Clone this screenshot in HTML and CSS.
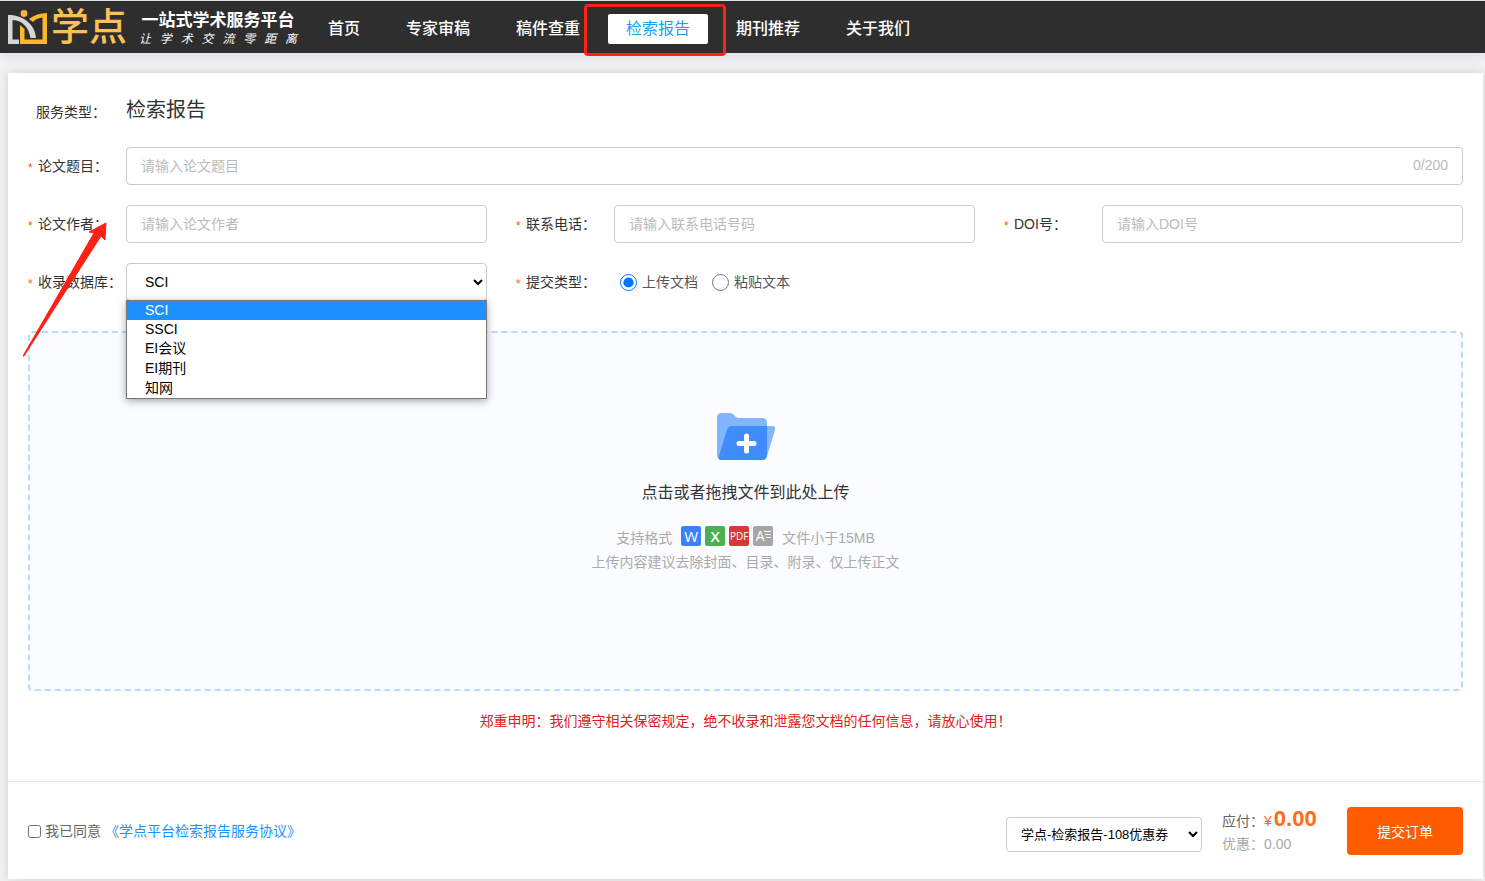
FILE: index.html
```html
<!DOCTYPE html>
<html lang="zh-CN">
<head>
  <meta charset="UTF-8">
  <title>学点 - 检索报告</title>
  <meta name="viewport" content="width=device-width, initial-scale=1.0">
  <link rel="stylesheet" href="styles.css">
</head>
<body>

<header class="header">
  <a class="logo" href="#">
    <svg class="logo-mark" viewBox="0 0 39 34" width="39" height="34" aria-hidden="true">
      <path d="M39 3 V34 H12 V15 L16.500 19 V29.500 H34.500 V7.500 C31 8 28 9 25 12 L21 9 C26 5 32 3 39 3 Z" fill="#fbb829"/>
      <path d="M0 5 C14 5 27 13 28 28 H22.500 C21 18 15 10.500 4.500 10 V29.500 H11 V34 H0 Z" fill="#d6d6d8"/>
      <circle cx="16" cy="3.5" r="3.4" fill="#fbb040"/>
    </svg>
    <span class="logo-name">学点</span>
    <span class="slogan">
      <span class="slogan-main">一站式学术服务平台</span>
      <span class="slogan-sub">让 学 术 交 流 零 距 离</span>
    </span>
  </a>
  <nav class="nav">
    <a href="#">首页</a>
    <a href="#">专家审稿</a>
    <a href="#">稿件查重</a>
    <a href="#" class="active">检索报告<span class="mark-box"></span></a>
    <a href="#">期刊推荐</a>
    <a href="#">关于我们</a>
  </nav>
</header>

<form class="card">
  <div class="card-body">
    <div class="field field-title">
      <span class="label">服务类型：</span>
      <h1>检索报告</h1>
    </div>

    <div class="field">
      <label class="label required" for="title">论文题目：</label>
      <div class="counted">
        <input type="text" id="title" maxlength="200" placeholder="请输入论文题目">
        <span class="counter">0/200</span>
      </div>
    </div>

    <div class="grid">
      <div class="field">
        <label class="label required" for="author">论文作者：</label>
        <input type="text" id="author" placeholder="请输入论文作者">
      </div>
      <div class="field">
        <label class="label required" for="phone">联系电话：</label>
        <input type="text" id="phone" placeholder="请输入联系电话号码">
      </div>
      <div class="field">
        <label class="label required" for="doi">DOI号：</label>
        <input type="text" id="doi" placeholder="请输入DOI号">
      </div>

      <div class="field">
        <label class="label required" for="database">收录数据库：</label>
        <div class="dropdown">
          <select id="database">
            <option selected>SCI</option>
            <option>SSCI</option>
            <option>EI会议</option>
            <option>EI期刊</option>
            <option>知网</option>
          </select>
          <ul class="options">
            <li class="selected">SCI</li>
            <li class="latin">SSCI</li>
            <li>EI会议</li>
            <li>EI期刊</li>
            <li>知网</li>
          </ul>
        </div>
      </div>
      <div class="field">
        <span class="label required">提交类型：</span>
        <div class="radios">
          <label><input type="radio" name="submitType" checked>上传文档</label>
          <label><input type="radio" name="submitType">粘贴文本</label>
        </div>
      </div>
    </div>

    <!-- upload area -->
    <div class="upload">
      <svg class="folder" viewBox="0 0 58 47" width="58" height="47" aria-hidden="true">
        <path d="M5 0 H13 C17 0 18 5 22 5 H45 Q50 5 50 10 V42 Q50 47 45 47 H5 Q0 47 0 42 V5 Q0 0 5 0 Z" fill="#82b6fa"/>
        <path d="M15 13 H55 Q59 13 58 17 L50 43 Q49 47 45 47 H5 Q1 47 2 43 L10 17 Q11 13 15 13 Z" fill="#82b6fa"/>
        <path d="M15 13 H50 V42 L49.500 44 Q48.500 47 45 47 H5 Q1 47 2 43 L10 17 Q11 13 15 13 Z" fill="#408cfa"/>
        <path d="M29.500 23 V38 M22 30.500 H37" stroke="#fff" stroke-width="5" stroke-linecap="round"/>
      </svg>
      <p class="upload-title">点击或者拖拽文件到此处上传</p>
      <div class="formats">
        <span>支持格式</span>
        <span class="badges">
          <span class="badge word">W</span>
          <span class="badge excel">X</span>
          <span class="badge pdf">PDF</span>
          <span class="badge txt">A<svg viewBox="0 0 7 10" width="7" height="10" aria-hidden="true"><path d="M0 1.500 H7 M1 4.500 H7 M2 7.500 H7" stroke="#fff"/></svg></span>
        </span>
        <span>文件小于15MB</span>
      </div>
      <p class="upload-tip">上传内容建议去除封面、目录、附录、仅上传正文</p>
    </div>

    <p class="notice">郑重申明：我们遵守相关保密规定，绝不收录和泄露您文档的任何信息，请放心使用！</p>
  </div>

  <div class="card-footer">
    <div class="agree">
      <input type="checkbox" id="agree">
      <label for="agree">我已同意</label>
      <a href="#">《学点平台检索报告服务协议》</a>
    </div>
    <div class="order">
      <select class="coupon" aria-label="优惠券">
        <option>学点-检索报告-108优惠券</option>
      </select>
      <div class="amounts">
        <div class="pay">应付：<span class="yen">¥</span><strong>0.00</strong></div>
        <div class="discount">优惠：0.00</div>
      </div>
      <button type="button" class="submit">提交订单</button>
    </div>
  </div>

  <!-- arrow pointing at the database field -->
  <svg class="arrow" viewBox="0 0 84 135" width="84" height="135" aria-hidden="true">
    <path d="M0 134 L71 11 L66 10 L83 1 L82 18 L78 14 L1 134 Z" fill="#ff2116" stroke="#ff2116"/>
  </svg>
</form>

</body>
</html>
```

FILE: styles.css
```css
* { box-sizing: border-box; }
body {
  margin: 0;
  background: #f2f2f2;
  color: #333;
  font-family: "Liberation Sans", "Noto Sans CJK SC", sans-serif;
  font-size: 14px;
  line-height: 20px;
}
h1, p, ul { margin: 0; padding: 0; font-weight: normal; }
a { text-decoration: none; }

/* header */
.header {
  display: flex;
  align-items: center;
  height: 53px;
  padding: 4px 0 0 8px;
  background: #2e2e2e;
  border-top: 1px solid #dce2e0;
  box-shadow: 0 2px 12px rgba(60, 80, 160, 0.15);
}
.logo { display: flex; align-items: center; width: 302px; margin-top: -4px; color: #fff; }
.logo-name { margin-left: 4px; font-size: 38px; line-height: 48px; font-weight: 500; color: #fbc056; }
.slogan { width: 158px; margin: 3px 0 0 12px; }
.slogan-main { display: block; font-size: 17px; line-height: 20px; font-weight: bold; text-align: center; white-space: nowrap; }
.slogan-sub {
  display: block;
  font-size: 12px;
  line-height: 16px;
  font-style: italic;
  text-align: justify;
  text-align-last: justify;
}
.nav { display: flex; gap: 10px; }
.nav a {
  position: relative;
  padding: 0 18px;
  color: #fff;
  font-size: 16px;
  font-weight: 500;
  line-height: 30px;
  white-space: nowrap;
}
.nav .active { background: #fff; color: #1e9fe8; border-radius: 2px; font-weight: 400; }
.mark-box {
  position: absolute;
  top: -10px;
  right: -18px;
  bottom: -12px;
  left: -24px;
  z-index: 2;
  border: 3px solid #ff2116;
  border-radius: 4px;
}

/* card */
.card {
  position: relative;
  margin: 20px 2px 2px 8px;
  background: #fff;
  box-shadow: 0 0 10px rgba(0, 0, 0, 0.15);
}
.card-body { display: flex; flex-direction: column; gap: 20px; padding: 20px 20px 50px; }
.grid { display: grid; grid-template-columns: repeat(3, 1fr); gap: 20px 29px; }
.field { display: flex; align-items: center; min-width: 0; }
.label { flex: 0 0 98px; white-space: nowrap; }
.required { display: flex; align-items: center; }
.required::before {
  content: "*";
  width: 10px;
  padding-top: 4px;
  color: #ff5c00;
  font-size: 12px;
}
.field-title { height: 34px; }
.field-title .label { padding: 4px 0 0 8px; }
.field-title h1 { font-size: 20px; line-height: 30px; }

input[type="text"], select {
  width: 100%;
  height: 38px;
  padding: 0 14px;
  border: 1px solid #ccc;
  border-radius: 4px;
  background: #fff;
  color: #000;
  font-family: inherit;
  font-size: 14px;
}
input::placeholder { color: #bbb; }
.counted { position: relative; flex: 1; }
.counter { position: absolute; right: 15px; top: 8px; color: #bbb; }

.dropdown { position: relative; flex: 1; }
.dropdown select { display: block; padding-right: 0; }
.options {
  position: absolute;
  top: 37px;
  left: 0;
  right: 0;
  z-index: 2;
  border: 1px solid #767676;
  background: #fff;
  color: #000;
  list-style: none;
  box-shadow: 0 2px 8px rgba(0, 0, 0, 0.35);
}
.options li { padding-left: 18px; line-height: 20px; }
.options .latin { line-height: 18px; }
.options .selected { background: #1e90ff; color: #fff; line-height: 19px; }

.radios { display: flex; gap: 14px; padding-left: 6px; color: #555; }
.radios label { display: flex; align-items: center; }
.radios input { width: 17px; height: 17px; margin: 0 5px 0 0; }

/* upload */
.upload {
  display: flex;
  flex-direction: column;
  align-items: center;
  height: 360px;
  margin-top: 10px;
  padding-top: 80px;
  border: 2px dashed #b8dcff;
  border-radius: 4px;
  background: #fafcff;
  color: #aaa;
}
.upload-title { margin-top: 20px; color: #333; font-size: 16px; line-height: 26px; }
.formats { display: flex; align-items: center; gap: 9px; height: 24px; margin-top: 18px; }
.formats > span { padding-top: 4px; }
.formats .badges { display: flex; gap: 4px; padding: 0; }
.badge {
  display: flex;
  align-items: center;
  justify-content: center;
  width: 20px;
  height: 20px;
  border-radius: 2px;
  color: #fff;
  font-family: "Open Sans", sans-serif;
  font-size: 15px;
}
.word { background: #3a82fa; }
.excel { background: #4caf50; font-weight: 600; }
.pdf { background: #d93838; font-size: 10px; }
.txt { background: #a6a6a6; font-size: 14px; }
.txt svg { margin: -3px 0 0 -1px; }
.upload-tip { margin-top: 4px; }
.notice { color: #e02020; text-align: center; }

/* footer */
.card-footer {
  display: flex;
  align-items: center;
  justify-content: space-between;
  padding: 25px 20px 24px;
  border-top: 1px solid #eaeaea;
}
.agree { display: flex; align-items: center; gap: 4px; color: #666; }
.agree input { width: 13px; height: 13px; margin: 0; }
.agree a { color: #1e90ff; }
.order { display: flex; align-items: center; }
.order .coupon { width: 196px; height: 35px; margin-top: 6px; padding: 0 0 0 10px; font-size: 13px; }
.amounts { width: 125px; margin-left: 20px; color: #666; }
.pay { height: 25px; line-height: 20px; }
.pay .yen, .pay strong { color: #ff6a13; }
.yen { margin-right: 2px; }
.pay strong { font-size: 22px; }
.discount { color: #aaa; }
.submit {
  width: 116px;
  height: 48px;
  border: 0;
  border-radius: 4px;
  background: #ff5c00;
  color: #fff;
  font-family: inherit;
  font-size: 14px;
}
.arrow { position: absolute; top: 149px; left: 15px; z-index: 3; }
```
